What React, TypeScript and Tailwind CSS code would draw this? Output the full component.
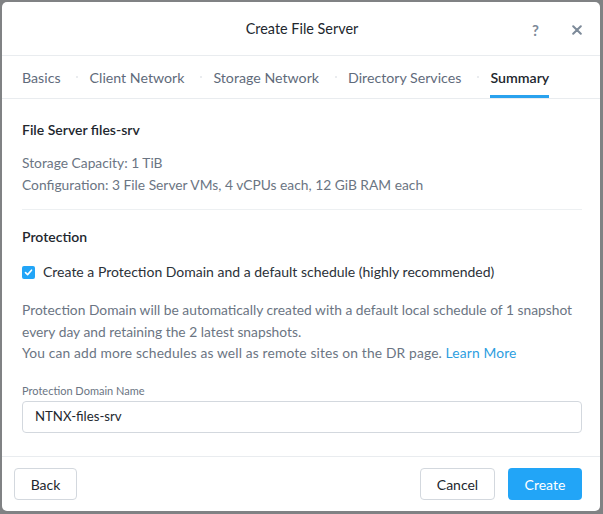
import React from "react";

export default function App() {
  const tabs = ["Basics", "Client Network", "Storage Network", "Directory Services", "Summary"];
  return (
    <div className="w-[603px] h-[514px] bg-[#808284] pl-[2px] pt-[2px] pr-[3px] pb-[3px]" style={{ fontFamily: "Lato, 'Open Sans', sans-serif" }}>
      <div className="w-full h-full bg-white rounded-[5px] flex flex-col overflow-hidden">
        {/* header */}
        <div className="h-[54px] border-b border-[#e9ecef] flex items-center relative">
          <div className="flex-1 text-center text-[14.4px] text-[#22272e] pl-[2px]">Create File Server</div>
          <div className="absolute left-[530px] top-[18px] text-[15px] leading-[20px] font-bold text-[#7d8a99]">?</div>
          <div className="absolute left-[570px] top-[23px]">
            <svg width="10" height="10" viewBox="0 0 10 10"><path d="M1.2 1.2L8.8 8.8M8.8 1.2L1.2 8.8" stroke="#7d8a99" strokeWidth="2" strokeLinecap="round" /></svg>
          </div>
        </div>
        {/* tabs */}
        <div className="h-[43px] border-b border-[#e9ecef] flex items-stretch pl-[20px]">
          {tabs.map((t, i) => (
            <React.Fragment key={t}>
              {i > 0 && (
                <div className="flex items-center justify-center w-[29px] pl-[4px]">
                  <div className="w-[2px] h-[2px] rounded-full bg-[#e3e6ea]" />
                </div>
              )}
              <div
                className={
                  "flex items-center text-[14.2px] pt-[1px] " +
                  (t === "Summary"
                    ? "text-[#22272e] font-semibold border-b-[3px] border-[#2aa2ee] pt-[4px]"
                    : "text-[#5f6b7b]")
                }
              >
                {t}
              </div>
            </React.Fragment>
          ))}
        </div>
        {/* body */}
        <div className="flex-1 pl-[20px] pr-[18px] pt-[22px]">
          <div className="text-[14px] font-semibold text-[#22272e] leading-[18px]">File Server files-srv</div>
          <div className="mt-[13px] text-[13.8px] text-[#6b7583] leading-[22px]">Storage Capacity: 1 TiB</div>
          <div className="text-[13.8px] text-[#6b7583] leading-[22px]">Configuration: 3 File Server VMs, 4 vCPUs each, 12 GiB RAM each</div>
          <div className="mt-[13px] h-px bg-[#edf0f2]" />
          <div className="mt-[18px] text-[14px] font-semibold text-[#22272e] leading-[18px]">Protection</div>
          <div className="mt-[17px] flex items-center gap-[8px]">
            <div className="w-[13px] h-[13px] rounded-[2px] bg-[#22a5f7] flex items-center justify-center">
              <svg width="9" height="9" viewBox="0 0 9 9"><path d="M1.5 4.6L3.6 6.6L7.5 2.2" stroke="white" strokeWidth="1.6" fill="none" strokeLinecap="round" strokeLinejoin="round" /></svg>
            </div>
            <div className="text-[14px] text-[#2b3138] leading-[18px]">Create a Protection Domain and a default schedule (highly recommended)</div>
          </div>
          <div className="mt-[18px] text-[13.8px] text-[#6b7583] leading-[21.5px]">
            Protection Domain will be automatically created with a default local schedule of 1 snapshot
            <br />
            every day and retaining the 2 latest snapshots.
            <br />
            <span className="tracking-[0.15px]">You can add more schedules as well as remote sites on the DR page.</span> <span className="text-[#2d9ee0] tracking-[0.15px]">Learn More</span>
          </div>
          <div className="mt-[20px] text-[11px] text-[#6b7583] leading-[14px]">Protection Domain Name</div>
          <div className="mt-[3px] h-[32px] border border-[#d3d8de] rounded-[4px] flex items-center px-[12px] text-[13.2px] text-[#22272e]">
            NTNX-files-srv
          </div>
        </div>
        {/* footer */}
        <div className="h-[55px] border-t border-[#e9ecef] flex items-center pl-[12px] pr-[18px]">
          <div className="h-[32px] w-[63px] border border-[#d3d8de] rounded-[4px] flex items-center justify-center text-[14px] text-[#22272e]">Back</div>
          <div className="flex-1" />
          <div className="h-[32px] w-[75px] border border-[#d3d8de] rounded-[4px] flex items-center justify-center text-[14px] text-[#22272e]">Cancel</div>
          <div className="ml-[13px] h-[32px] w-[74px] rounded-[4px] bg-[#22a5f7] flex items-center justify-center text-[14px] text-white">Create</div>
        </div>
      </div>
    </div>
  );
}
